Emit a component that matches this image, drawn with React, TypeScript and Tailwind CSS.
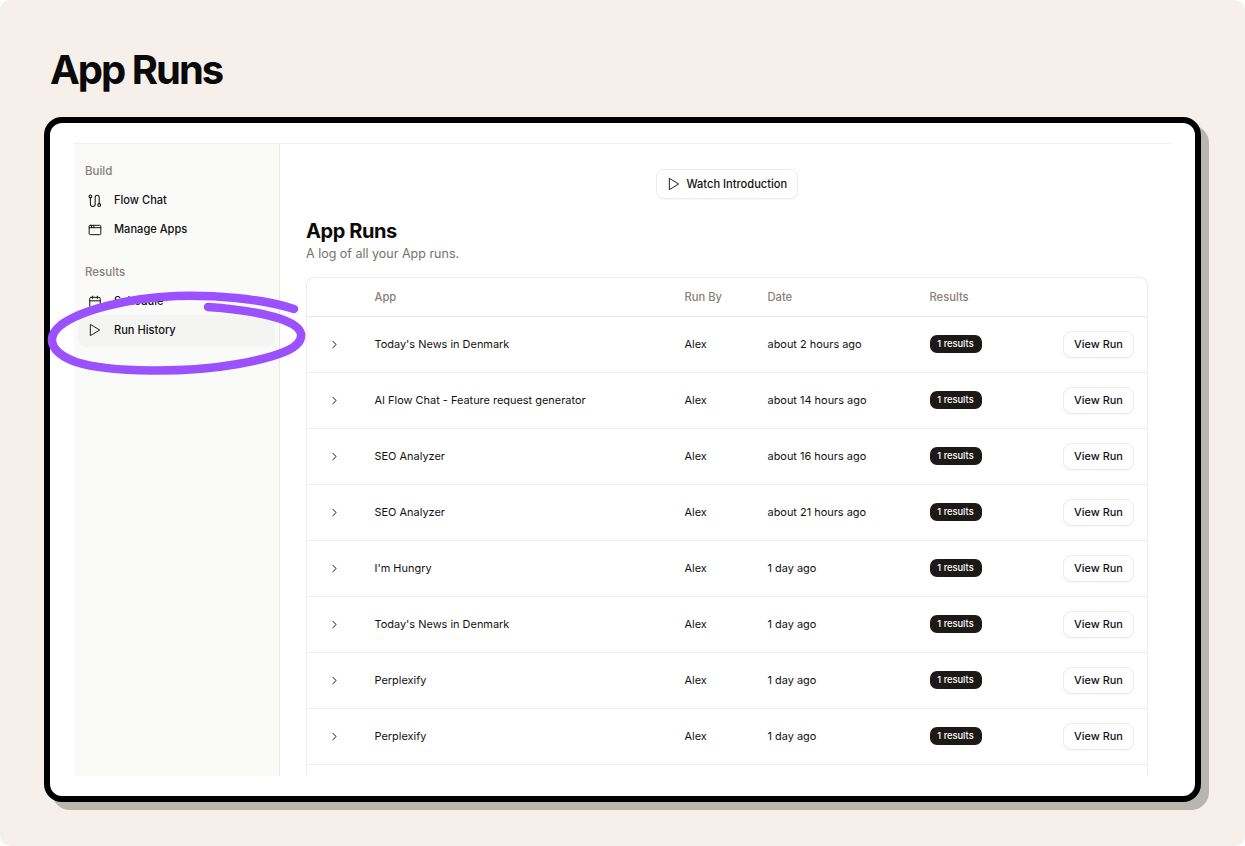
import React from "react";
import { ChevronRight, AppWindow, Calendar } from "lucide-react";

const rows = [
  ["Today's News in Denmark", "about 2 hours ago"],
  ["AI Flow Chat - Feature request generator", "about 14 hours ago"],
  ["SEO Analyzer", "about 16 hours ago"],
  ["SEO Analyzer", "about 21 hours ago"],
  ["I'm Hungry", "1 day ago"],
  ["Today's News in Denmark", "1 day ago"],
  ["Perplexify", "1 day ago"],
  ["Perplexify", "1 day ago"],
];

function FlowIcon() {
  return (
    <svg className="shrink-0" width="14" height="14" viewBox="0 0 14 14" fill="none" stroke="#111110" strokeWidth="1.05" strokeLinecap="round" strokeLinejoin="round">
      <circle cx="2.4" cy="2.4" r="1.4" />
      <path d="M2.4 3.8V10a2.4 2.4 0 0 0 4.8 0V3.2a2 2 0 0 1 4 0V9.6" />
      <circle cx="11.2" cy="11" r="1.4" />
    </svg>
  );
}

function PlayIcon() {
  return (
    <svg className="shrink-0" width="16" height="16" viewBox="0 0 24 24" fill="none" stroke="#111110" strokeWidth="1.4" strokeLinejoin="round">
      <path d="M5 3.5 19 12 5 20.5z" />
    </svg>
  );
}

function NavItem({ icon, label }: { icon: React.ReactNode; label: string }) {
  return (
    <div className="mx-[4px] flex h-[29px] items-center rounded-lg pl-[10px] text-[11.1px] font-medium text-[#111110]">
      <span className="flex w-[14px] items-center justify-center">{icon}</span>
      <span className="ml-[12px]">{label}</span>
    </div>
  );
}

export default function App() {
  return (
    <div className="h-[846px] w-[1245px] overflow-hidden bg-white font-['Inter',sans-serif]">
      <div className="flex h-full flex-col rounded-[10px] bg-[#f7f0ea] pl-[44px] pr-[36px] pt-[47px]">
        <h1 className="ml-[6px] h-[70px] text-[40px] font-bold leading-[46px] tracking-[-0.05em] text-[#0a0a0a]">App Runs</h1>
        <div className="relative h-[685px] w-[1157px] rounded-[18px] border-[6px] border-black bg-white pb-[20px] pl-[24px] pr-[23px] pt-[20px] shadow-[8px_8px_0_0_#b9b6ae]">
          <div className="flex h-full overflow-hidden border-t border-[#f0efee]">
            <aside className="h-full w-[206px] shrink-0 border-r border-[#e9e8e6] bg-[#fafaf8] pt-[20px]">
              <div className="h-[15px] pl-[11px] text-[11.5px] font-medium leading-[15px] text-[#87807a]">Build</div>
              <div className="mt-[7px]">
                <NavItem icon={<FlowIcon />} label="Flow Chat" />
                <NavItem icon={<AppWindow size={14} strokeWidth={1.7} color="#111110" />} label="Manage Apps" />
              </div>
              <div className="mt-[21px] h-[15px] pl-[11px] text-[11.5px] font-medium leading-[15px] text-[#87807a]">Results</div>
              <div className="mt-[7px]">
                <NavItem icon={<Calendar size={14} strokeWidth={1.7} color="#111110" />} label="Schedule" />
                <div className="mx-[4px] -mt-[1px] flex h-[32px] items-center rounded-lg bg-[#f4f4f3] pb-[2px] pl-[10px] text-[11.1px] font-medium text-[#111110]">
                  <span className="flex w-[14px] items-center justify-center"><PlayIcon /></span>
                  <span className="ml-[12px]">Run History</span>
                </div>
              </div>
            </aside>
            <main className="min-w-0 flex-1 overflow-hidden pl-[26px] pr-[24px]">
              <div className="flex justify-center pt-[25px]">
                <button className="-ml-[1px] flex h-[30px] w-[142px] items-center gap-[5px] rounded-lg border border-[#ecebe9] bg-white pl-[9px] text-[11.1px] font-medium text-[#111110] shadow-[0_1px_1px_rgba(0,0,0,0.03)]">
                  <PlayIcon />
                  Watch Introduction
                </button>
              </div>
              <h2 className="mt-[19px] text-[20px] font-bold leading-[26px] tracking-[-0.02em] text-[#0c0a09]">App Runs</h2>
              <p className="mt-[1px] text-[12.5px] leading-[18px] text-[#79716b]">A log of all your App runs.</p>
              <div className="mt-[14px] rounded-t-[8px] border-x border-t border-[#eeedeb]">
                <div className="grid h-[39px] grid-cols-[67.5px_310px_83px_162px_1fr] items-center border-b border-[#e9e8e6] text-[11.2px] font-medium text-[#87807a]">
                  <span />
                  <span>App</span>
                  <span>Run By</span>
                  <span>Date</span>
                  <span>Results</span>
                </div>
                {rows.map(([name, date], i) => (
                  <div key={i} className="grid h-[56px] grid-cols-[67.5px_310px_83px_162px_1fr] items-center border-b border-[#eeedeb] text-[10.95px] text-[#111110]">
                    <span className="flex justify-center pr-[12px]"><ChevronRight size={13} strokeWidth={1.8} color="#111110" /></span>
                    <span>{name}</span>
                    <span>Alex</span>
                    <span>{date}</span>
                    <span className="flex items-center justify-between pr-[13px]">
                      <span className="mb-[1px] flex h-[18px] w-[52px] items-center justify-center rounded-[7px] bg-[#1c1917] text-[9.3px] font-medium text-white">1 results</span>
                      <span className="flex h-[27px] w-[71px] items-center justify-center rounded-lg border border-[#ecebe9] bg-white text-[10.9px] font-medium text-[#111110] shadow-[0_1px_1px_rgba(0,0,0,0.03)]">View Run</span>
                    </span>
                  </div>
                ))}
                <div className="h-[40px]" />
              </div>
            </main>
          </div>
          <svg className="absolute left-[-2px] top-[167px] overflow-visible" width="270" height="90" viewBox="50 290 270 90" fill="none">
            <path
              d="M296 309C262 298 215 295 178 296C130 298 83 310 63 325C48 337 51 352 78 362C112 373 190 373 240 364C284 356 305 347 303 334C301 321 266 311 210 307"
              stroke="#9b51ff"
              strokeWidth="8.5"
              strokeLinecap="round"
              strokeLinejoin="round"
            />
          </svg>
        </div>
      </div>
    </div>
  );
}
